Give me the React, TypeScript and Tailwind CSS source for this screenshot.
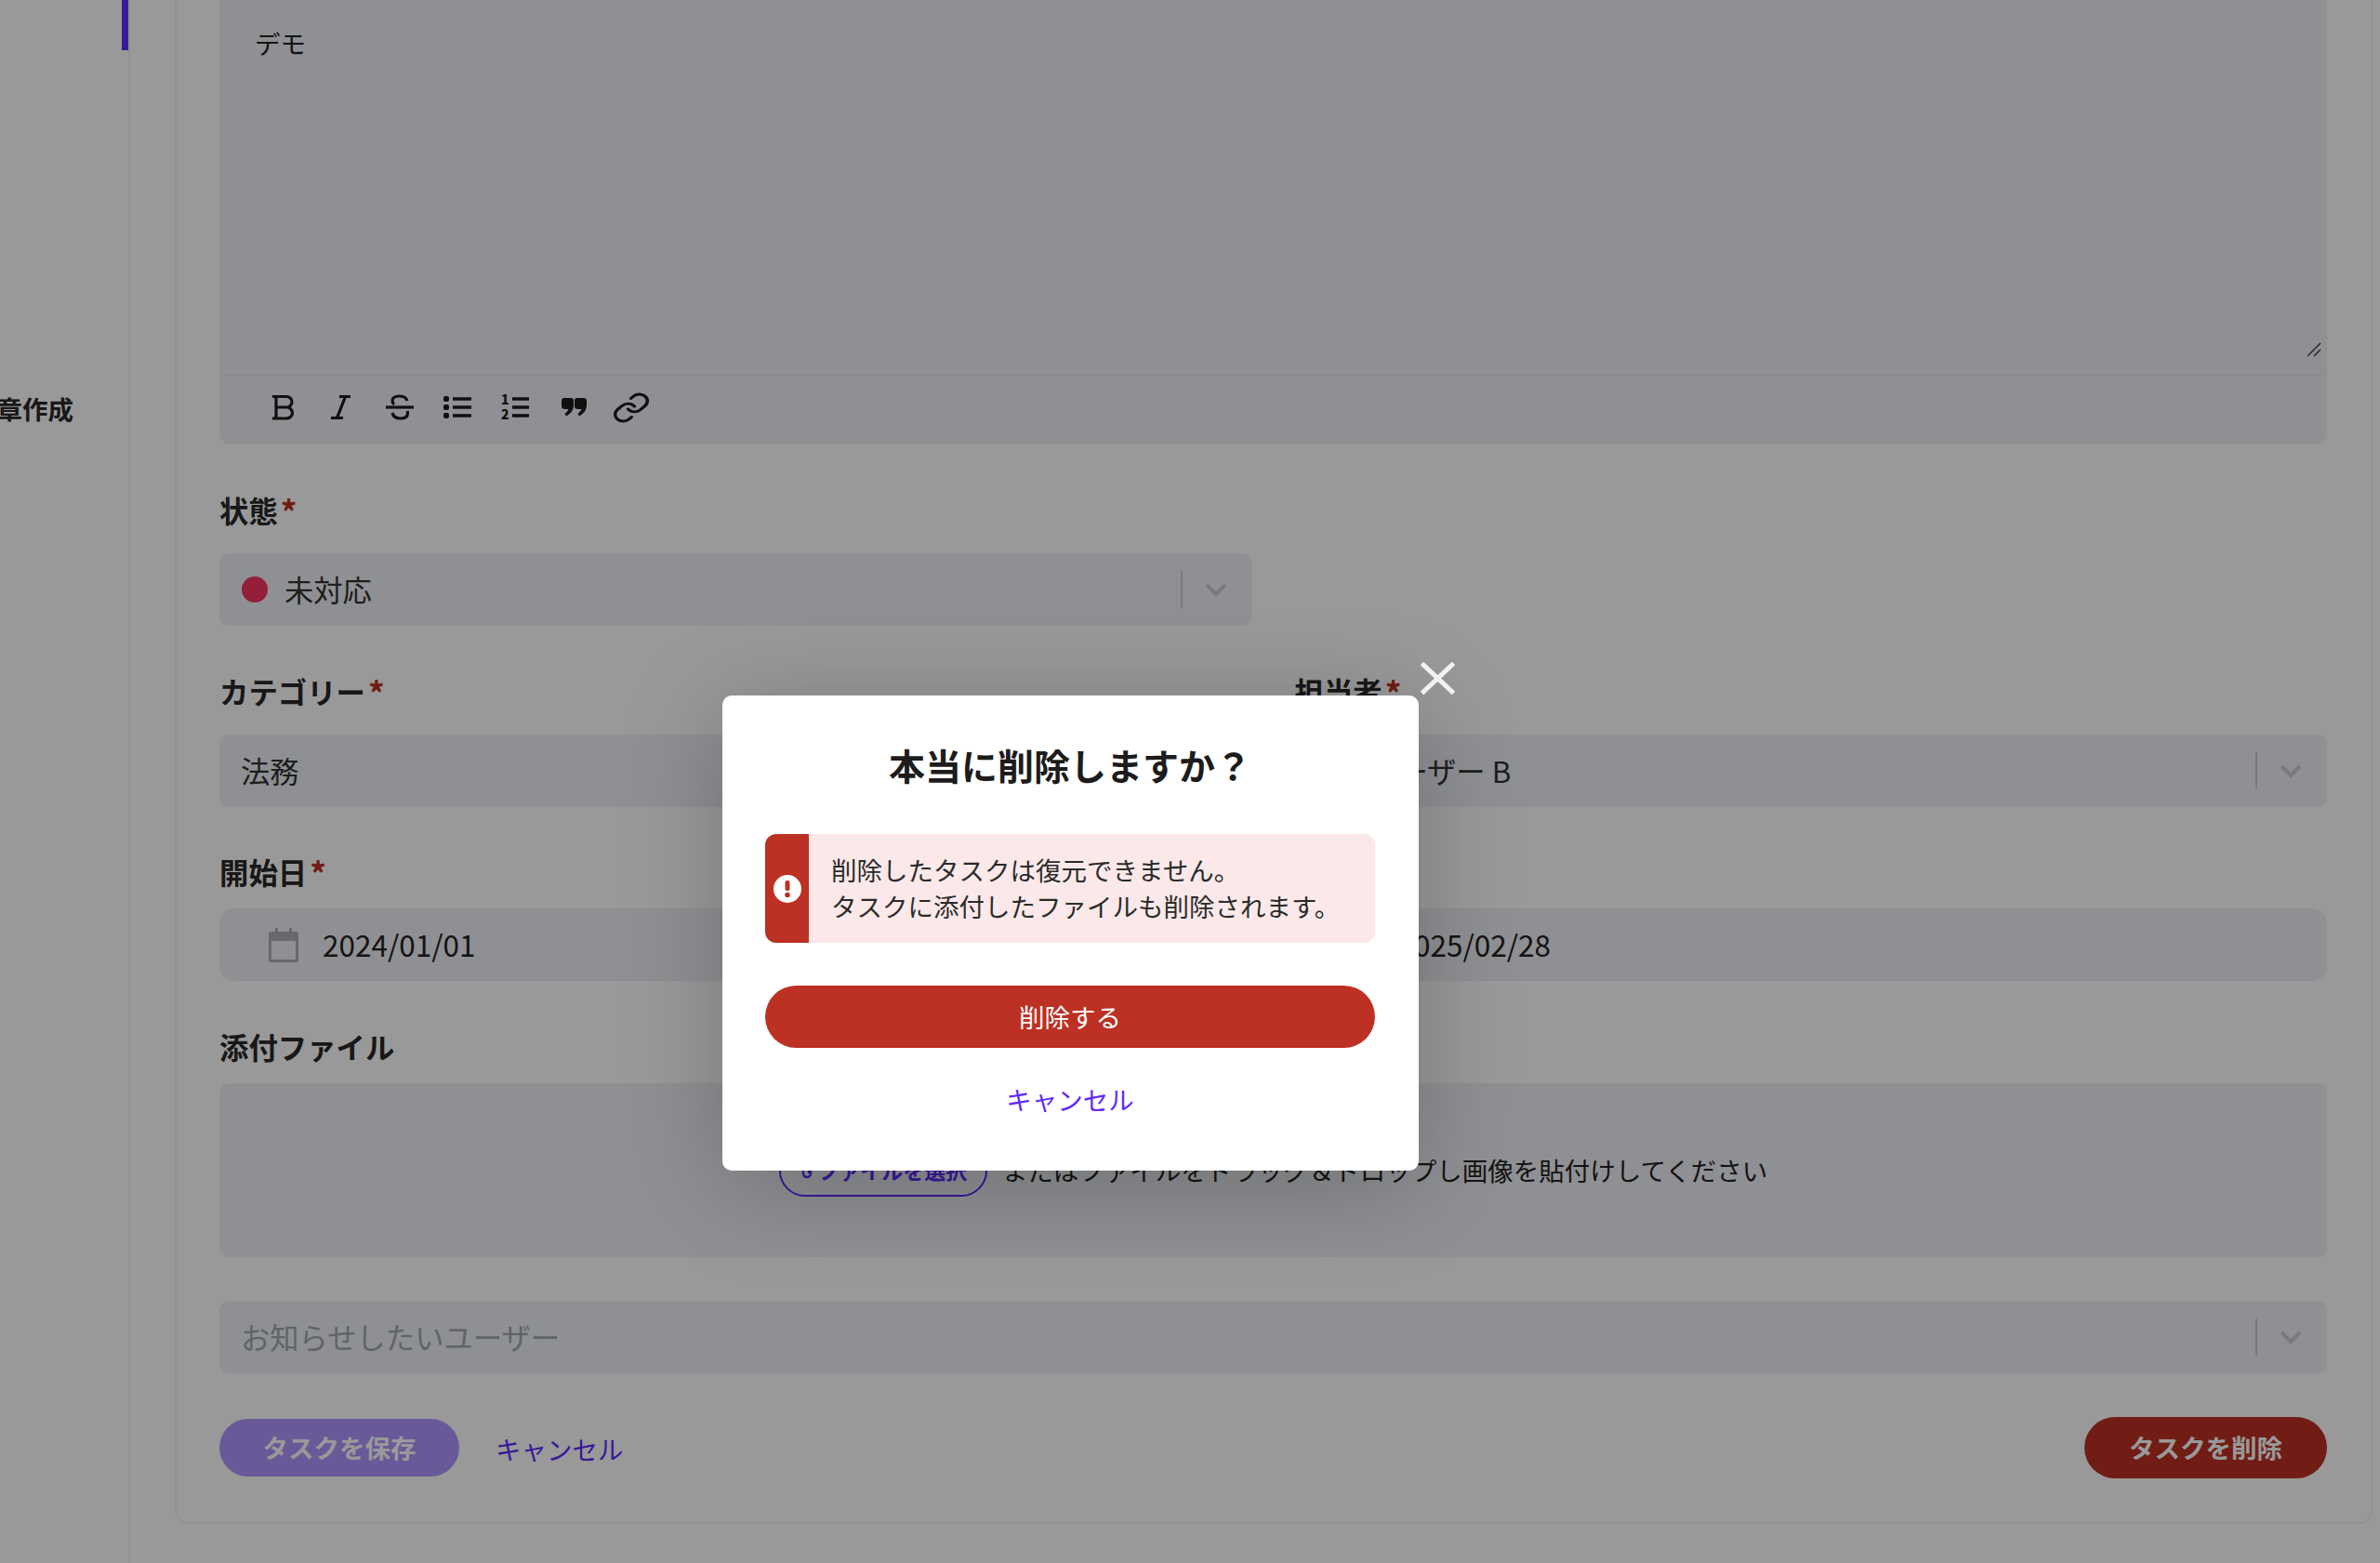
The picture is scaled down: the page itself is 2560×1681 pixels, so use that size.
import React from "react";

function Label({ text, required = true }: { text: string; required?: boolean }) {
  return (
    <div className="flex h-[46px] items-center text-[31.4px] leading-[46px] font-bold text-[#292929]">
      <span>{text}</span>
      {required && <span className="ml-[3px] text-[35px] text-[#bc3123]">*</span>}
    </div>
  );
}

function Chevron() {
  return (
    <svg width="24" height="16" viewBox="0 0 24 16" fill="none" className="shrink-0">
      <path d="M2 3 L12 13 L22 3" stroke="#cccccc" strokeWidth="4" />
    </svg>
  );
}

function Select({ children, muted = false }: { children: React.ReactNode; muted?: boolean }) {
  return (
    <div className="flex h-[78px] items-center rounded-[10px] bg-[#eff0f5] pl-[23px]">
      <div className={`flex flex-1 items-center text-[31.3px] ${muted ? "text-[#a0a6b1]" : "text-[#333333]"}`}>{children}</div>
      <div className="h-[40px] w-[2px] bg-[#cccccc]" />
      <div className="ml-[24px] mr-[27px]">
        <Chevron />
      </div>
    </div>
  );
}

function CalendarIcon() {
  return (
    <svg width="32" height="37" viewBox="0 0 32 37" fill="none" className="shrink-0">
      <rect x="7" y="0" width="3" height="8" fill="#afafb5" />
      <rect x="22" y="0" width="3" height="8" fill="#afafb5" />
      <path d="M2 4 H30 a2 2 0 0 1 2 2 V35 a2 2 0 0 1 -2 2 H2 a2 2 0 0 1 -2 -2 V6 a2 2 0 0 1 2 -2 Z M3 14 V34 H29 V14 Z" fill="#afafb5" fillRule="evenodd" />
    </svg>
  );
}

function DateField({ value }: { value: string }) {
  return (
    <div className="flex h-[78px] items-center gap-[26px] rounded-[16px] bg-[#eff0f5] pl-[53px] text-[31.5px] text-[#222222]">
      <CalendarIcon />
      <span>{value}</span>
    </div>
  );
}

function ToolIcon({ children }: { children: React.ReactNode }) {
  return (
    <svg width="40" height="40" viewBox="0 0 40 40" fill="none" stroke="#1c1c1c" strokeWidth="3.2">
      {children}
    </svg>
  );
}

const QUOTE = "M10 10 H17 Q20 10 20 13 V17.5 C20 23 17 27 12 29.5 L10.5 27 C12.5 25.5 13.8 24 14.2 22 H10.5 Q7 22 7 18.5 V13 Q7 10 10 10 Z";

function Toolbar() {
  return (
    <div className="flex h-[73px] items-center pb-[7px] pl-[38px]">
      <div className="flex w-[62.3px] justify-center">
        <ToolIcon>
          <path d="M8 8.5 H23 a6 5.75 0 0 1 0 11.5 H11 M23 20 a6.5 6 0 0 1 0 12 H8 M12 8.5 V32" />
        </ToolIcon>
      </div>
      <div className="flex w-[62.3px] justify-center">
        <ToolIcon>
          <path d="M18 8.5 H30 M9 31.5 H22 M24.5 8.5 L15.5 31.5" />
        </ToolIcon>
      </div>
      <div className="flex w-[62.3px] justify-center">
        <ToolIcon>
          <path d="M5 20 H35" />
          <path d="M28 13 C27 10 24 8 20 8 C15 8 12 10 12 13 C12 15 12.5 16 14 17" />
          <path d="M12 26 C13 30 16 32 20.5 32 C25.5 32 28.5 30 28.5 26.5 C28.5 25.5 28.4 25 28 24" />
        </ToolIcon>
      </div>
      <div className="flex w-[62.3px] justify-center">
        <ToolIcon>
          <path d="M15 11 H35 M15 20 H35 M15 29 H35" strokeWidth="3.6" />
          <rect x="5" y="8" width="6" height="6" rx="2" fill="#1c1c1c" stroke="none" />
          <rect x="5" y="17" width="6" height="6" rx="2" fill="#1c1c1c" stroke="none" />
          <rect x="5" y="26" width="6" height="6" rx="2" fill="#1c1c1c" stroke="none" />
        </ToolIcon>
      </div>
      <div className="flex w-[62.3px] justify-center">
        <ToolIcon>
          <path d="M17 11 H35 M17 20 H35 M17 29 H35" strokeWidth="3.6" />
          <text x="5" y="17" fontSize="14" fontWeight="900" fill="#1c1c1c" stroke="none" fontFamily="'Noto Sans CJK JP', sans-serif">1</text>
          <text x="5" y="32.5" fontSize="14" fontWeight="900" fill="#1c1c1c" stroke="none" fontFamily="'Noto Sans CJK JP', sans-serif">2</text>
        </ToolIcon>
      </div>
      <div className="flex w-[62.3px] justify-center">
        <ToolIcon>
          <path d={QUOTE} fill="#1c1c1c" stroke="none" />
          <path d={QUOTE} transform="translate(14 0)" fill="#1c1c1c" stroke="none" />
        </ToolIcon>
      </div>
      <div className="flex w-[62.3px] justify-center">
        <svg width="42" height="35" viewBox="0 0 24 24" preserveAspectRatio="none" fill="none" stroke="#1c1c1c" strokeWidth="2" strokeLinecap="round" strokeLinejoin="round">
          <path d="M10 13a5 5 0 0 0 7.54.54l3-3a5 5 0 0 0-7.07-7.07l-1.72 1.71" />
          <path d="M14 11a5 5 0 0 0-7.54-.54l-3 3a5 5 0 0 0 7.07 7.07l1.71-1.71" />
        </svg>
      </div>
    </div>
  );
}

export default function App() {
  return (
    <div className="relative flex h-[1681px] w-[2560px] overflow-hidden bg-white font-['Noto_Sans_CJK_JP','Noto_Sans',sans-serif]">
      {/* sidebar */}
      <aside className="flex w-[140px] shrink-0 flex-col overflow-hidden border-r-2 border-[#f2f2f2]">
        <div className="ml-[131px] h-[54px] w-[7px] shrink-0 bg-[#6029ff]" />
        <div className="mt-[366px] flex justify-end whitespace-nowrap pr-[59px] text-[27.5px] leading-[38px] font-bold text-[#292929]">
          文章作成
        </div>
      </aside>

      {/* card */}
      <main className="ml-[48px] mr-[8px] h-[1639px] flex-1 rounded-b-[14px] border-x-2 border-b-2 border-[#f2f2f2] pl-[46px] pr-[47px]">
        <div className="rounded-b-[12px] bg-[#eff0f5]">
          <div className="relative h-[403px] pl-[38px] pt-[26px] text-[27.5px] leading-[40px] text-[#222222]">
            デモ
            <svg width="16" height="16" viewBox="0 0 16 16" fill="none" stroke="#444444" strokeWidth="1.5" className="absolute bottom-[19px] right-[6px]">
              <path d="M1 15 L15 1 M8 15 L15 8" />
            </svg>
          </div>
          <div className="mx-[5px] h-[2px] bg-[#e6e6f2]" />
          <Toolbar />
        </div>

        <div className="mt-[48px]">
          <Label text="状態" />
        </div>
        <div className="mt-[23px] grid grid-cols-2 gap-x-[46px]">
          <Select>
            <span className="ml-[1px] mr-[18px] h-[28px] w-[28px] rounded-full bg-[#f8325f]" />
            未対応
          </Select>
        </div>

        <div className="mt-[48px] grid grid-cols-2 gap-x-[46px]">
          <Label text="カテゴリー" />
          <Label text="担当者" />
        </div>
        <div className="mt-[23px] grid grid-cols-2 gap-x-[46px]">
          <Select>法務</Select>
          <Select>
            <span className="-ml-[5px]">デモユーザー B</span>
          </Select>
        </div>

        <div className="mt-[47px] grid grid-cols-2 gap-x-[46px]">
          <Label text="開始日" />
          <Label text="期限日" />
        </div>
        <div className="mt-[16px] grid grid-cols-2 gap-x-[46px]">
          <DateField value="2024/01/01" />
          <DateField value="2025/02/28" />
        </div>

        <div className="mt-[48px]">
          <Label text="添付ファイル" required={false} />
        </div>
        <div className="mt-[16px] flex h-[187px] items-center justify-center gap-[16px] rounded-[10px] bg-[#eff0f5]">
          <div className="flex h-[56px] w-[224px] items-center justify-center gap-[2px] rounded-full border-2 border-[#6029ff] text-[23px] font-bold text-[#6029ff]">
            <svg width="18" height="22" viewBox="0 0 18 22" fill="none" stroke="#6029ff" strokeWidth="2.4">
              <path d="M13 6 V14 a4 4 0 0 1 -8 0 V6 a3 3 0 0 1 6 0 V14" />
            </svg>
            ファイルを選択
          </div>
          <span className="text-[27.5px] text-[#222222]">またはファイルをドラッグ＆ドロップし画像を貼付けしてください</span>
        </div>

        <div className="mt-[47px]">
          <Select muted>お知らせしたいユーザー</Select>
        </div>

        <div className="mt-[47px] flex items-center">
          <button className="flex h-[62px] w-[258px] items-center justify-center rounded-full bg-[#af94fd] text-[27.5px] font-bold text-white">
            タスクを保存
          </button>
          <span className="ml-[39px] pt-[3px] text-[27.5px] text-[#6029ff]">キャンセル</span>
          <button className="ml-auto flex h-[66px] w-[261px] items-center justify-center rounded-full bg-[#bc3123] text-[27.5px] font-bold text-white">
            タスクを削除
          </button>
        </div>
      </main>

      {/* overlay */}
      <div className="absolute inset-0 bg-black/40" />

      {/* modal */}
      <div className="absolute left-[777px] top-[748px] h-[511px] w-[749px] rounded-[10px] bg-white pl-[46px] pr-[47px] pt-[49px] shadow-[0_16px_110px_rgba(0,0,0,0.22)]">
        <svg width="37" height="35" viewBox="0 0 37 35" fill="none" stroke="#f2f2f2" strokeWidth="5" className="absolute -top-[36px] -right-[39px]">
          <path d="M1.5 1.5 L35.5 33.5 M35.5 1.5 L1.5 33.5" />
        </svg>
        <h2 className="text-center text-[39px] leading-[50px] font-bold text-[#1c1c1c]">本当に削除しますか？</h2>
        <div className="mt-[50px] flex h-[117px] overflow-hidden rounded-[12px] bg-[#fae9e8]">
          <div className="flex w-[47px] shrink-0 items-center justify-center bg-[#bc3123]">
            <svg width="30" height="30" viewBox="0 0 30 30">
              <circle cx="15" cy="15" r="15" fill="#ffffff" />
              <rect x="12.5" y="6" width="5" height="11" rx="2" fill="#bc3123" />
              <circle cx="15" cy="21.5" r="2.8" fill="#bc3123" />
            </svg>
          </div>
          <div className="flex flex-col justify-center pb-[1px] pl-[24px] text-[27.5px] leading-[39px] text-[#2b2b2b]">
            <span>削除したタスクは復元できません。</span>
            <span>タスクに添付したファイルも削除されます。</span>
          </div>
        </div>
        <button className="mt-[46px] flex h-[67px] w-full items-center justify-center rounded-full bg-[#bc3123] text-[27.5px] text-white">
          削除する
        </button>
        <div className="mt-[35px] text-center text-[27.5px] leading-[40px] text-[#6029ff]">キャンセル</div>
      </div>
    </div>
  );
}
